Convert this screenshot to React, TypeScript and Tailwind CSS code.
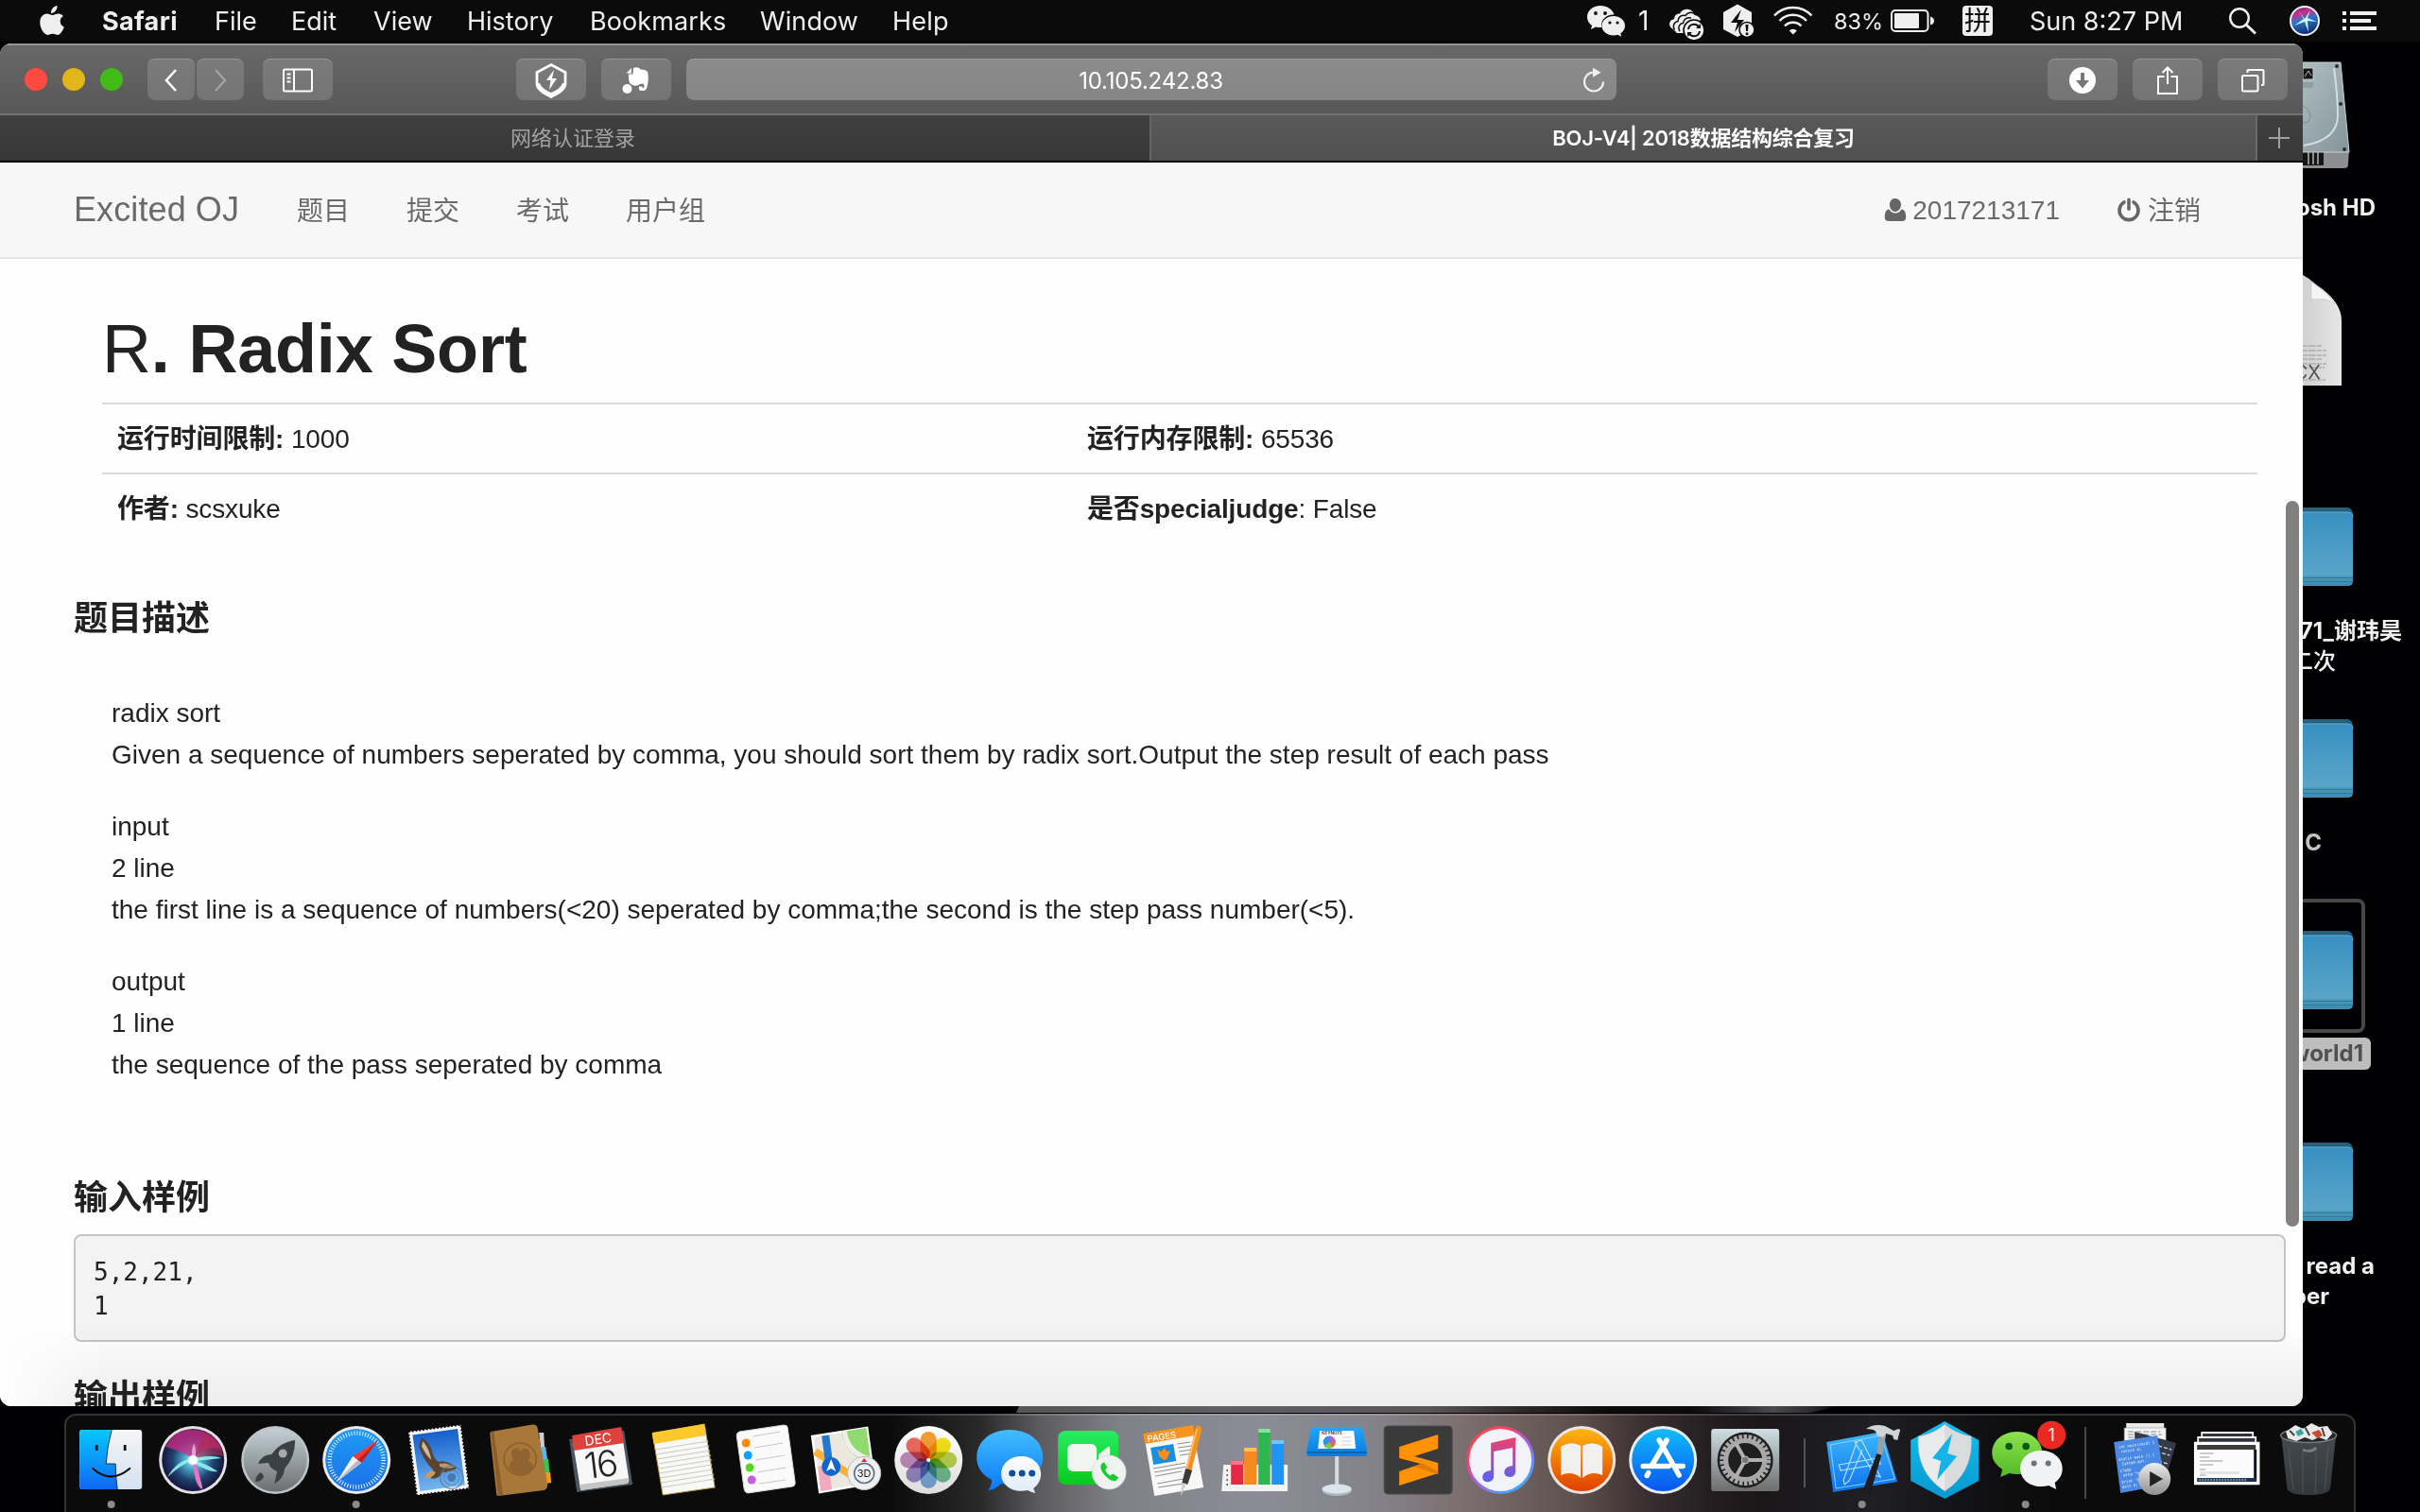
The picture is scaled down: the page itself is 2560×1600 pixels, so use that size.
import React from "react";

type Kids = { children?: React.ReactNode };

const SYS = "font-['Inter','Noto_Sans_CJK_SC',sans-serif]";
const HELV = "font-['Liberation_Sans','Noto_Sans_CJK_SC',sans-serif]";

/* ---------- menu bar ---------- */

const menus = [
  { label: "File", cls: "w-[81px]" },
  { label: "Edit", cls: "w-[87px]" },
  { label: "View", cls: "w-[99px]" },
  { label: "History", cls: "w-[130px]" },
  { label: "Bookmarks", cls: "w-[180px] tracking-[0.1px]" },
  { label: "Window", cls: "w-[140px] tracking-[0.1px]" },
  { label: "Help", cls: "w-[80px] tracking-[0.2px]" },
];

function MenuBar() {
  return (
    <header className={`${SYS} flex h-[44px] w-full items-center bg-[#0b0b0b] text-[27px] text-[#efefef]`}>
      <svg className="ml-[40px] h-[34px] w-[30px] shrink-0" viewBox="0 0 30 34">
        <path
          fill="#efefef"
          d="M20.500 1c.3 2.300-.6 4.300-1.900 5.800-1.300 1.400-3 2.200-4.700 2.100-.2-2.200.8-4.200 2-5.500C17.200 2 19.100 1.100 20.500 1zM27 11.900c-2.200 1.400-3.300 3-3.300 5.600 0 2.900 1.600 5 4.100 6.100-1.300 3.900-4 8.400-6.900 8.400-1.900 0-2.700-1.200-5.200-1.200-2.500 0-3.400 1.200-5.200 1.200C6.700 32 2.300 25.200 2.300 18.600c0-5.700 3.600-9.100 7.400-9.100 2.300 0 4.100 1.400 5.800 1.400 1.600 0 3.600-1.500 6.300-1.500 2.100.1 4 .9 5.200 2.500z"
        />
      </svg>
      <span className="ml-[38px] w-[119px] pt-[2px] font-bold tracking-[0.35px]">Safari</span>
      {menus.map((m) => (
        <span key={m.label} className={`pt-[2px] ${m.cls}`}>
          {m.label}
        </span>
      ))}
      <div className="flex-1" />
      <svg className="h-[44px] w-[440px] shrink-0" viewBox="1670 0 440 44" fill="#efefef">
        <path d="M1693 6c-8 0-14 5-14 12 0 4 2 7 5 9l-1 4 5-2.500c1.500.4 3 .6 5 .6l1.500-.1c-2-8 5-14 13-13.500C1706 10 1700 6 1693 6z" />
        <path d="M1707 17c-7 0-12.500 4.500-12.500 10.200 0 6 5.500 10.200 12.500 10.200 1.500 0 3-.2 4.300-.6l4 2-1-3.500c3-2 4.700-4.800 4.700-8.100 0-5.700-5.500-10.200-12-10.200z" />
        <g fill="#0b0b0b">
          <circle cx="1688" cy="14" r="1.900" />
          <circle cx="1698" cy="14" r="1.900" />
          <circle cx="1703" cy="24" r="1.600" />
          <circle cx="1711" cy="24" r="1.600" />
        </g>
        <text x="1733" y="32" fontSize="28" fontFamily="Inter">1</text>
        <g>
          <path d="M1770 31c-3-1.500-4-4-4-6 .5-3 2.500-4.500 5-4.700 0-4 3-6.300 6-5.800 1.500-3.500 5.500-5.500 9.500-4.500 3 .8 5.500 3 6 6 3 .5 5.500 2 6.500 5l-18 14h-7z" />
          <path d="M1771.500 31.500c-2.500-4-.5-8.500 3.500-9 0-4.500 4-7 8-6 1.500-3 6-4.500 10-1.500" fill="none" stroke="#0b0b0b" strokeWidth="1.500" />
          <path d="M1777 33c-2.500-4-.5-8 3.500-8.500.5-4.500 4.500-6.500 8.500-5.500" fill="none" stroke="#0b0b0b" strokeWidth="1.500" />
          <circle cx="1792" cy="32" r="11" stroke="#0b0b0b" strokeWidth="1.600" />
          <path d="M1786 31a6 6 0 0 1 11-2.500M1798 33a6 6 0 0 1-11 2.500" fill="none" stroke="#0b0b0b" strokeWidth="2" />
          <path d="M1799 25v5h-5zM1785 39v-5h5z" fill="#0b0b0b" />
        </g>
        <path d="M1838 4.500l15 8.500v18l-15 8-15-8V13z" />
        <path d="M1842 10l-11 14h7l-3 10 10-13h-7z" fill="#0b0b0b" />
        <circle cx="1848" cy="31.500" r="8" stroke="#0b0b0b" strokeWidth="1.600" />
        <path d="M1846.500 26h3l-.5 7h-2zM1846.700 34.500h2.600v2.600h-2.600z" fill="#0b0b0b" />
        <g fill="none" stroke="#efefef" strokeWidth="2.500">
          <path d="M1877 16.500a27 27 0 0 1 39.500 0" />
          <path d="M1882.500 22a19.500 19.500 0 0 1 28.500 0" />
          <path d="M1888 27.500a12 12 0 0 1 17.500 0" />
        </g>
        <path d="M1896.800 36.500l4-4a5.500 5.500 0 0 0-8 0z" />
        <text x="1940" y="30.500" fontSize="23.500" fontFamily="Inter">83%</text>
        <rect x="2001" y="11" width="38.500" height="22" rx="4" fill="none" stroke="#efefef" strokeWidth="2" />
        <rect x="2004" y="14" width="26" height="16" rx="1" />
        <path d="M2042 17.500q4 1 4 4.500t-4 4.500z" />
        <rect x="2076" y="6" width="32" height="32" rx="4" />
        <text x="2092" y="32" textAnchor="middle" fontSize="28" fill="#0b0b0b" fontFamily="Noto Sans CJK SC">拼</text>
      </svg>
      <span className="ml-[37px] w-[203px] pt-[2px]">Sun 8:27 PM</span>
      <svg className="h-[44px] w-[210px] shrink-0" viewBox="2350 0 210 44">
        <defs>
          <linearGradient id="mbSiri" x1="0" y1="0" x2=".3" y2="1">
            <stop offset="0" stopColor="#3a2d7e" />
            <stop offset=".3" stopColor="#d02b86" />
            <stop offset=".55" stopColor="#2a78c8" />
            <stop offset="1" stopColor="#15307c" />
          </linearGradient>
        </defs>
        <g fill="none" stroke="#efefef" strokeWidth="2.400">
          <circle cx="2369" cy="19" r="9.800" />
          <path d="M2376 26l10 9.500" strokeWidth="3" />
        </g>
        <circle cx="2438" cy="22" r="15" fill="url(#mbSiri)" stroke="#f2f2f2" strokeWidth="2" />
        <path d="M2438 20l-7-9 6 9-10 7 11-4 4 11-1-12 10 1-10-4 3-8z" fill="#c9f6ff" />
        <g fill="#efefef">
          <path d="M2478 12h4v4h-4zM2486 12h28v4h-28zM2478 20h4v4h-4zM2486 20h22v4h-22zM2478 28h4v4h-4zM2486 28h28v4h-28z" />
        </g>
      </svg>
    </header>
  );
}

/* ---------- Safari toolbar and tabs ---------- */

function ToolButton({ className, children }: Kids & { className: string }) {
  return (
    <button
      className={`flex h-[44px] shrink-0 items-center justify-center rounded-[8px] border-t border-[#989898] bg-gradient-to-b from-[#7b7b7b] to-[#747474] ${className}`}
    >
      {children}
    </button>
  );
}

function Toolbar() {
  return (
    <div className="flex h-[74px] items-center border-t-2 border-[#949494] bg-gradient-to-b from-[#686868] to-[#585858]">
      <div className="ml-[26px] flex gap-[16px]">
        <i className="size-[24px] rounded-full bg-[#ff4a42]" />
        <i className="size-[24px] rounded-full bg-[#e2b51d]" />
        <i className="size-[24px] rounded-full bg-[#42ba18]" />
      </div>
      <ToolButton className="ml-[26px] w-[50px]">
        <svg width="18" height="28" viewBox="0 0 18 28" fill="none" stroke="#fff" strokeWidth="2.600">
          <path d="M14 3L4 14l10 11" />
        </svg>
      </ToolButton>
      <ToolButton className="ml-[2px] w-[50px]">
        <svg width="18" height="28" viewBox="0 0 18 28" fill="none" stroke="#a4a4a4" strokeWidth="2.200">
          <path d="M4 3l10 11L4 25" />
        </svg>
      </ToolButton>
      <ToolButton className="ml-[20px] w-[74px]">
        <svg width="32" height="26" viewBox="0 0 32 26" fill="none" stroke="#fff" strokeWidth="2">
          <rect x="1" y="1.500" width="30" height="23" rx="1.500" />
          <path d="M12 1.500v23M4.500 6.500h4M4.500 10.500h4M4.500 14.500h4" />
        </svg>
      </ToolButton>
      <ToolButton className="ml-[194px] w-[74px]">
        <svg width="36" height="38" viewBox="0 0 36 38">
          <path d="M18 2.500l15 8v12c0 6-7 10-15 14-8-4-15-8-15-14v-12z" fill="none" stroke="#fff" strokeWidth="2.800" />
          <path d="M3 22c0 6 7 11 15 15 8-4 15-9 15-15l-3 0c-2 5-7 8-12 10-5-2-10-5-12-10z" fill="#fff" />
          <path d="M21 8l-8 11h4.500l-1.500 10 8-12h-5z" fill="#fff" />
        </svg>
      </ToolButton>
      <ToolButton className="ml-[16px] w-[74px]">
        <svg width="32" height="32" viewBox="0 0 32 32" fill="#fff">
          <path d="M13 3c3-1.500 6-1 7.500 1.500 4 .2 7 .8 7.800 3 1 5 .5 11-.8 15.500-.9 3.500-3.200 4.500-6.500 4-2-.4-2.500-2-2-4.500h3.500v1.500h1.500c1-1.500.5-4-1-4.500l-3.500.5c-1.500 2-3.500 1.800-5.500 1.500-3.500-.6-6-3-6-8L8 9.500h4.500z" />
          <path d="M11 3L5.500 8.500H11z" />
          <circle cx="6.500" cy="25" r="5" />
        </svg>
      </ToolButton>
      <div
        className={`${SYS} ml-[16px] flex h-[44px] w-[984px] items-center rounded-[8px] border-t border-[#9c9c9c] bg-gradient-to-b from-[#8b8b8b] to-[#868686] text-[24px] text-white`}
      >
        <span className="w-[35px]" />
        <span className="flex-1 pt-[2px] text-center tracking-[-0.2px]">10.105.242.83</span>
        <svg className="mr-[12px]" width="24" height="30" viewBox="0 0 24 30">
          <path d="M12 6.500A10 10 0 1 0 22 16.500" fill="none" stroke="#efefef" strokeWidth="2.200" />
          <path d="M11 1.500l8.500 5.300-8.500 5z" fill="#efefef" />
        </svg>
      </div>
      <div className="flex-1" />
      <ToolButton className="w-[74px]">
        <svg width="28" height="28" viewBox="0 0 28 28">
          <circle cx="14" cy="14" r="14" fill="#fff" />
          <path d="M12 6h4v8h5l-7 8.500L7 14h5z" fill="#777" />
        </svg>
      </ToolButton>
      <ToolButton className="ml-[16px] w-[74px]">
        <svg width="24" height="32" viewBox="0 0 24 32" fill="none" stroke="#fff" strokeWidth="2">
          <path d="M8.500 12H2v18h20V12h-6.500M12 20V3M6.500 8L12 2.500 17.500 8" />
        </svg>
      </ToolButton>
      <ToolButton className="mr-[16px] ml-[16px] w-[74px]">
        <svg width="26" height="26" viewBox="0 0 26 26" fill="none" stroke="#fff" strokeWidth="2">
          <rect x="2" y="8" width="16.500" height="16.500" rx="1.500" />
          <path d="M7.500 5V2.500q0-.5 1-.5h15q1 0 1 1v14q0 1-1 1H22" />
        </svg>
      </ToolButton>
    </div>
  );
}

function TabBar() {
  return (
    <div className={`${SYS} flex h-[52px] border-t-2 border-b-2 border-t-[#727272] border-b-black text-[22px]`}>
      <div className="flex w-[1218px] items-center justify-center border-r-2 border-[#666] bg-gradient-to-b from-[#404040] to-[#363636] pr-[4px] text-[#a3a3a3]">
        网络认证登录
      </div>
      <div className="flex flex-1 items-center justify-center bg-gradient-to-b from-[#595959] to-[#505050] font-semibold text-white">
        <span className="tracking-[-0.25px]">BOJ-V4| 2018数据结构综合复习</span>
      </div>
      <div className="flex w-[50px] items-center justify-center border-l-2 border-[#6a6a6a] bg-gradient-to-b from-[#404040] to-[#383838] pr-[2px]">
        <svg width="22" height="22" viewBox="0 0 22 22" stroke="#a0a0a0" strokeWidth="2">
          <path d="M11 0v22M0 11h22" />
        </svg>
      </div>
    </div>
  );
}

/* ---------- page ---------- */

function SiteNav() {
  return (
    <nav className="flex h-[102px] shrink-0 items-center border-b-2 border-[#e4e4e4] bg-[#f7f7f7] pl-[78px] text-[28px] text-[#6a6a6a]">
      <span className="w-[236px] text-[36px] tracking-[0.1px]">Excited OJ</span>
      <div className="flex gap-[60px] pt-[3px]">
        <span>题目</span>
        <span>提交</span>
        <span>考试</span>
        <span>用户组</span>
      </div>
      <div className="flex-1" />
      <svg width="24" height="24" viewBox="0 0 24 24" fill="#666">
        <path d="M12 0c3.500 0 6 3 6 6.500S15.500 14 12 14 6 10.500 6 6.500 8.500 0 12 0z" />
        <path d="M5.500 11.500C2 12 .8 15 .8 20c0 2.500 1.500 4 4 4h14.400c2.500 0 4-1.500 4-4 0-5-1.200-8-4.700-8.500C17 14 15 15.500 12 15.500S7 14 5.500 11.500z" />
      </svg>
      <span className="ml-[6px] pt-[2px]">2017213171</span>
      <svg className="ml-[60px]" width="26" height="26" viewBox="0 0 26 26" fill="none" stroke="#666" strokeWidth="3.600" strokeLinecap="round">
        <path d="M13 2.200v10M8 5a10 10 0 1 0 10 0" />
      </svg>
      <span className="mr-[108px] ml-[7px] pt-[3px]">注销</span>
    </nav>
  );
}

function Row({ a, b, c, d }: { a: React.ReactNode; b: string; c: React.ReactNode; d: string }) {
  return (
    <div className="flex h-[74px] border-t-2 border-[#dadada] pt-[17px] leading-[40px] tracking-[-0.15px]">
      <div className="w-[1026px] pl-[16px]">
        <b>{a}</b> {b}
      </div>
      <div className="pl-[16px]">
        <b>{c}</b>
        {d}
      </div>
    </div>
  );
}

function Page() {
  return (
    <main className={`${HELV} flex h-[1316px] flex-col overflow-hidden bg-[#fefefe] text-[28px] text-[#222]`}>
      <SiteNav />
      <div className="ml-[108px] w-[2280px]">
        <h1 className="mt-[55px] h-[97px] text-[72px] leading-[80px] font-bold tracking-[-0.2px]">
          <span className="font-normal">R</span>. Radix Sort
        </h1>
        <Row a="运行时间限制:" b="1000" c="运行内存限制:" d=" 65536" />
        <Row a="作者:" b="scsxuke" c="是否specialjudge" d=": False" />
      </div>
      <h3 className="mt-[61px] ml-[78px] h-[40px] text-[36px] leading-[40px] font-bold">题目描述</h3>
      <div className="mt-[58px] ml-[118px] flex flex-col gap-[32px] leading-[44px]">
        <p>
          radix sort
          <br />
          Given a sequence of numbers seperated by comma, you should sort them by radix sort.Output the step result of each pass
        </p>
        <p>
          input
          <br />
          2 line
          <br />
          the first line is a sequence of numbers(&lt;20) seperated by comma;the second is the step pass number(&lt;5).
        </p>
        <p>
          output
          <br />1 line
          <br />
          the sequence of the pass seperated by comma
        </p>
      </div>
      <h3 className="mt-[99px] ml-[78px] h-[40px] text-[36px] leading-[40px] font-bold">输入样例</h3>
      <pre className="mt-[18px] ml-[78px] h-[114px] w-[2340px] shrink-0 rounded-[8px] border-2 border-[#c4c4c4] bg-[#f3f3f3] pt-[20px] pl-[19px] font-['DejaVu_Sans_Mono',monospace] text-[26px] leading-[36px]">
        {"5,2,21,\n1"}
      </pre>
      <h3 className="mt-[39px] ml-[78px] h-[40px] shrink-0 text-[36px] leading-[40px] font-bold">输出样例</h3>
    </main>
  );
}

function SafariWindow() {
  return (
    <section className="absolute top-[46px] left-0 h-[1442px] w-[2436px] overflow-hidden rounded-[12px] bg-white">
      <Toolbar />
      <TabBar />
      <Page />
      <div className="absolute bottom-0 left-0 h-[86px] w-full bg-gradient-to-t from-black/[0.07] to-transparent [mask-image:linear-gradient(to_right,transparent,black_110px)]" />
      <div className="absolute top-[484px] left-[2418px] h-[768px] w-[14px] rounded-full bg-[#808080]" />
    </section>
  );
}

/* ---------- desktop ---------- */

function Folder({ top }: { top: string }) {
  return (
    <svg className={`absolute left-[2404px] ${top}`} width="88" height="86" viewBox="0 0 88 86">
      <defs>
        <linearGradient id="folder" x1="0" y1="0" x2="0" y2="1">
          <stop offset="0" stopColor="#3890c0" />
          <stop offset=".85" stopColor="#5aa5c9" />
          <stop offset=".87" stopColor="#4a98bc" />
          <stop offset="1" stopColor="#3f8aac" />
        </linearGradient>
      </defs>
      <path d="M0 1h78q7 0 7 8v10H0z" fill="#285f7c" />
      <path d="M0 6h79q6 0 6 5v68q0 5-5 5H0z" fill="url(#folder)" />
      <path d="M0 6h79q6 0 6 5" fill="none" stroke="#66b3d8" />
      <path d="M0 75.500h85M0 79.500h85" stroke="#2f7898" />
    </svg>
  );
}

function Label({ className, children }: Kids & { className: string }) {
  return <div className={`absolute text-right text-[24px] leading-[32px] font-bold whitespace-nowrap ${className}`}>{children}</div>;
}

function Desktop() {
  return (
    <div className={`${SYS} text-[#f0f0f0]`}>
      <svg className="absolute top-[60px] left-[2400px]" width="100" height="125" viewBox="0 0 100 125">
        <defs>
          <linearGradient id="hdd" x1="0" y1="0" x2="1" y2="1">
            <stop offset="0" stopColor="#b4c3c5" />
            <stop offset="1" stopColor="#84949a" />
          </linearGradient>
        </defs>
        <path d="M20 98h65l-1 16q0 4-4 4H20z" fill="#8c8f90" />
        <path d="M20 100h38v15H20z" fill="#151515" />
        <path d="M41 101h2v13h-2zM46 101h2v13h-2zM51 101h2v13h-2z" fill="#8b8b8b" />
        <path d="M20 6h56l9 95H20z" fill="url(#hdd)" stroke="#c7d2d3" />
        <path d="M69 12q4 30 4 50 0 26-36 32" fill="none" stroke="#d4dede" strokeWidth="2" />
        <path d="M36 52q8 4 8 11t-8 7" fill="none" stroke="#7c8a90" />
        <path d="M36 12h11v12H36z" fill="#16181a" stroke="#ccc" />
        <path d="M38 21l4-6 3 5" stroke="#bbb" fill="none" />
        <path d="M36 27h12l-2 6H36z" fill="#8fa0a4" />
        <g fill="#203438">
          <circle cx="72" cy="10" r="2" />
          <circle cx="76" cy="50" r="2" />
          <circle cx="80" cy="98" r="2" />
        </g>
      </svg>
      <Label className="top-[204px] right-[47px]">osh HD</Label>
      <svg className="absolute top-[286px] left-[2400px]" width="80" height="124" viewBox="0 0 80 124">
        <defs>
          <linearGradient id="docx" x1="0" y1="0" x2="1" y2="0">
            <stop offset=".4" stopColor="#d3d3d3" />
            <stop offset="1" stopColor="#e6e6e6" />
          </linearGradient>
        </defs>
        <path d="M20 0q16 2 30 15 27 18 27 38v69H20z" fill="url(#docx)" />
        <path d="M45 12v19q18-2 25 4-6-9-25-23z" fill="#f4f4f4" stroke="#bbb" strokeWidth=".5" />
        <path d="M36 80h20M36 85h25M36 90h25M36 94h20M36 99h25M36 103h23M36 116h24" stroke="#999" strokeWidth="1" strokeDasharray="5 1 8 1" />
        <text x="55" y="115" textAnchor="end" fontSize="20" fill="#555" fontFamily="Inter">CX</text>
      </svg>
      <Folder top="top-[536px]" />
      <Label className="top-[651px] right-[19px] leading-[33px]">71_谢玮昊</Label>
      <Label className="top-[684px] right-[89px] font-medium">二次</Label>
      <Folder top="top-[760px]" />
      <Label className="top-[876px] right-[104px] text-[#c4c4c4]">C</Label>
      <div className="absolute top-[951px] left-[2380px] h-[142px] w-[122px] rounded-[8px] border-4 border-[#474747]" />
      <Folder top="top-[984px]" />
      <Label className="top-[1098px] right-[52px] w-[90px] rounded-[6px] bg-[#bdbdbd] pr-[8px] leading-[34px] text-[#505050]">
        world1
      </Label>
      <Folder top="top-[1208px]" />
      <Label className="top-[1324px] right-[48px]">read a</Label>
      <Label className="top-[1356px] right-[96px]">ber</Label>
    </div>
  );
}

/* ---------- dock ---------- */

function DockIcon({ children, running }: Kids & { running?: boolean }) {
  return (
    <svg className="h-[104px] w-[86.4px] shrink-0" viewBox="0 0 86 104">
      {children}
      {running && <circle cx="42.500" cy="94" r="4" fill="#8a8a8a" />}
    </svg>
  );
}

const petals = ["#f7941d", "#f5e000", "#b5cf3b", "#63b985", "#6aa5dc", "#8d7cc0", "#bd7fb5", "#ee5a4f"];

function Defs() {
  const g = (id: string, a: string, b: string) => (
    <linearGradient id={id} x1="0" y1="0" x2="0" y2="1">
      <stop offset="0" stopColor={a} />
      <stop offset="1" stopColor={b} />
    </linearGradient>
  );
  return (
    <svg className="absolute" width="0" height="0">
      <defs>
        {g("gFinder", "#06c8fd", "#1067f3")}
        {g("gFace", "#f4f5f7", "#d4e2f2")}
        {g("gLaunch", "#c3d0d6", "#6c6f70")}
        {g("gSaf", "#1e9bf5", "#1d6fe8")}
        {g("gSky", "#1560cc", "#74b5ef")}
        {g("gMsg", "#43bdfd", "#0a79fb")}
        {g("gSmall", "#fdfdfd", "#dcebf8")}
        {g("gGreen", "#28ec63", "#08c91d")}
        {g("gBook", "#ffb60d", "#e03f00")}
        {g("gStore", "#0fbcfb", "#0a55f0")}
        {g("gPref", "#cfdfe4", "#6c6d6c")}
        {g("gX", "#3cb8fb", "#0f72ee")}
        {g("gShield", "#12bff0", "#0898cf")}
        {g("gWe", "#8ce24f", "#53b925")}
        {g("gTrash", "#454b50", "#33383c")}
        {g("gNote", "#f23f6c", "#5363fa")}
        {g("gWhite", "#ffffff", "#dcdcdc")}
        {g("gKey", "#24a6fb", "#067ce0")}
        {g("gBall", "#ededed", "#8e8e8e")}
        <radialGradient id="gSiri" cx=".5" cy=".5" r=".55">
          <stop offset="0" stopColor="#d9fbff" />
          <stop offset=".22" stopColor="#52b5d3" />
          <stop offset=".6" stopColor="#20406f" />
          <stop offset="1" stopColor="#120c2e" />
        </radialGradient>
      </defs>
    </svg>
  );
}

function Dock() {
  return (
    <footer className="absolute top-[1496px] left-[68px] flex h-[108px] w-[2424px] items-start rounded-t-[12px] border-2 border-[#ffffff2a] bg-[linear-gradient(to_right,#0b0b0b_0,#0b0b0b_36%,#2a2a2b_40%,#5b5b5e_42.500%,#808188_46%,#8b8c95_52%,#84838a_57%,#7c6f70_61%,#5e504c_66%,#3a2f31_69%,#241d20_72%,#1a1719_74%,#1f1f24_79%,#101012_84%,#0b0b0b_87%)] pl-[5px]">
      <Defs />
      <DockIcon running>
        <rect x="9" y="15" width="66" height="63" rx="3" fill="url(#gFace)" />
        <path d="M12 15h31q-5 18-6 36h10q0 14 2 27H12q-3 0-3-3V18q0-3 3-3z" fill="url(#gFinder)" />
        <path d="M43 15q-5 18-6 36h10q0 14 2 27" fill="none" stroke="#17365c" strokeWidth="1" />
        <path d="M27 31v6M57 31v6" stroke="#111" strokeWidth="2.800" />
        <path d="M23 56q19 17 39 0" fill="none" stroke="#111" strokeWidth="2.200" strokeLinecap="round" />
      </DockIcon>
      <DockIcon>
        <circle cx="43" cy="47" r="36" fill="#e4e1e4" />
        <circle cx="43" cy="47" r="33" fill="url(#gSiri)" />
        <path d="M14 33Q24 13 45 15q22 2 29 22-14-8-31 8-14-8-29-12z" fill="#cf2b85" opacity=".75" />
        <path d="M55 19q17 8 20 24-12-4-32 4z" fill="#b42a4c" opacity=".6" />
        <path d="M43 47Q30 52 16 65q10-18 27-20 22-4 30 0-16 2-29 3 12 2 25 11-8 2-25-9 8 18 9 28-6-6-10-30z" fill="#93f1ef" opacity=".9" />
        <path d="M43 48q7 8 9 30-8-6-9-30z" fill="#ef6fc0" />
        <path d="M43 47q-3-9 1-18 4 9 0 18z" fill="#f0c4ee" opacity=".7" />
        <circle cx="43" cy="47" r="5" fill="#fff" />
      </DockIcon>
      <DockIcon>
        <circle cx="43" cy="47" r="36" fill="#bcc5ca" />
        <circle cx="43" cy="47" r="33.500" fill="url(#gLaunch)" />
        <path d="M64 26q-16 2-25 15-10 0-14 10l11-1q1 6 9 9l-3 13q10-5 11-16 11-12 11-30z" fill="#3b4045" />
        <circle cx="51" cy="40" r="4.500" fill="#a3abae" />
        <path d="M28 60q-6 3-6 10 7 0 9-6z" fill="#3b4045" />
      </DockIcon>
      <DockIcon running>
        <circle cx="43" cy="47" r="36" fill="#e9eaec" />
        <circle cx="43" cy="47" r="33" fill="url(#gSaf)" />
        <circle cx="43" cy="47" r="28.500" fill="none" stroke="#e6f4ff" strokeWidth="4.500" strokeDasharray="1 1.984" />
        <path d="M66 26L48 50l-9-7z" fill="#ef3b36" />
        <path d="M66 26L48 50l-4-3z" fill="#c21e21" />
        <path d="M22 70l17-27 9 7z" fill="#f3f3f5" />
        <path d="M22 70l22-23 4 3z" fill="#b9bcc2" />
      </DockIcon>
      <DockIcon>
        <g transform="rotate(-7.500 43 47)">
          <rect x="15" y="13" width="56" height="68" fill="#f6f6f6" />
          <rect x="15" y="13" width="56" height="68" fill="none" stroke="#0b0b0b" strokeWidth="2" strokeDasharray="1.800 2" />
          <rect x="19" y="17" width="48" height="60" fill="url(#gSky)" />
          <path d="M28 21q7 5 9 15 1 10 6 13 7-2 18 9-8 4-15 2-7 8-14 5l4-8Q26 44 24 29z" fill="#5a4431" />
          <path d="M29 25q6 10 6 21-6-8-8-16z" fill="#c8b9a2" />
          <path d="M43 51q9-1 15 6-8 1-15-3z" fill="#b99a70" />
          <path d="M33 57q-6 2-7 7 9 2 12-5z" fill="#c99a5c" />
          <circle cx="54" cy="67" r="12" fill="none" stroke="#58789a" strokeWidth="1.500" opacity=".7" />
          <circle cx="54" cy="67" r="8" fill="none" stroke="#58789a" opacity=".7" />
          <circle cx="54" cy="67" r="4.500" fill="#3b6795" opacity=".7" />
        </g>
      </DockIcon>
      <DockIcon>
        <path d="M63 18l5 0 1 18-4 1z" fill="#c9ccd0" />
        <path d="M65 33h5l2 14-5 1z" fill="#58b9e8" />
        <path d="M67 46h6l1 15-5 1z" fill="#37c554" />
        <path d="M69 60h6l1 11-6 1z" fill="#f09a19" />
        <path d="M12 17L56 9.500q5-.5 5.500 4L72 73q0 5-4 6l-48 6q-2 0-2-2L11 19z" fill="#a8773a" />
        <path d="M12 17l3 0 10 67-5 1z" fill="#8b5e2a" />
        <circle cx="43" cy="46" r="17" fill="none" stroke="#8a5f2c" strokeWidth="1.500" />
        <path d="M31 55q1-6 5-8-3-4-2-9 3-5 8-3l1 4q2-5 7-4 5 3 3 9l-2 4q5 2 7 7-5 7-14 7-9 0-13-7z" fill="#8f6430" />
      </DockIcon>
      <DockIcon>
        <path d="M9 25l58-9 9 57-59 8z" fill="#4a5763" />
        <path d="M13 29l52-8 7 46q1 4-4 5l-47 7z" fill="#f7f7f7" />
        <path d="M20 73l52-7-1 6-50 7z" fill="#c5c5c5" />
        <path d="M12 21l52-9 3 17-53 8z" fill="#e0413d" />
        <text x="39.500" y="30" textAnchor="middle" fontSize="14" fill="#fff" fontFamily="Inter" transform="rotate(-8 39.500 25)">DEC</text>
        <text x="42" y="65" textAnchor="middle" fontSize="38" fontWeight="300" fill="#222" fontFamily="Inter" letterSpacing="-2" transform="rotate(-7 42 52)">16</text>
      </DockIcon>
      <DockIcon>
        <path d="M10 19l55-10 11 67-55 8z" fill="#f8f8f6" stroke="#b69b3e" strokeWidth="1" />
        <path d="M9.500 18l55-9 2 12-55 9z" fill="#fdc82b" />
        <g stroke="#c9c9c9" strokeWidth="1">
          <path d="M13 36l56-9M14 41l56-9M15 46l56-9M16 51l56-9M17 56l56-9M17 61l56-9M18 66l56-9M19 71l56-9M20 76l56-9" />
        </g>
      </DockIcon>
      <DockIcon>
        <path d="M16 17l47-7q4 0 4 3l8 58q0 4-3 4l-47 7q-3 0-4-4l-8-57q0-3 3-4z" fill="#fafafa" stroke="#d9d9d9" />
        <path d="M30 22l29-5M32 34l30-5M33 47l31-5M35 60l30-5M37 72l28-4" stroke="#c7c7c7" />
        <circle cx="23" cy="29" r="4.500" fill="#ff8a0a" />
        <circle cx="25" cy="42" r="4.500" fill="#12a0ff" />
        <circle cx="27" cy="55" r="4.500" fill="#55d61f" />
        <circle cx="29" cy="68" r="4.500" fill="#c45fe0" />
      </DockIcon>
      <DockIcon>
        <path d="M6 22l58-9 8 58-58 10z" fill="#ece8df" stroke="#fff" strokeWidth="2.500" />
        <path d="M37 17l26-4 5 36q-25-4-31-32z" fill="#8fdb70" />
        <path d="M40 16q3 24 27 30" fill="none" stroke="#f2efe8" strokeWidth="5" />
        <path d="M12 54l11-2 4 26-12 2z" fill="#f4a9bc" />
        <path d="M9 38l56 37" stroke="#fcb034" strokeWidth="8" />
        <path d="M20 21l4 30" stroke="#2477cc" strokeWidth="8" />
        <circle cx="26" cy="54" r="10" fill="#1267cd" />
        <path d="M26 46l5 13-5-3-5 3z" fill="#fff" />
        <circle cx="61" cy="61" r="17.500" fill="#efefef" stroke="#bbb" />
        <circle cx="61" cy="61" r="10.500" fill="none" stroke="#54748b" strokeWidth="1.600" />
        <text x="61" y="65" textAnchor="middle" fontSize="11" fill="#222" fontFamily="Inter">3D</text>
        <path d="M61 45l3 4h-6z" fill="#e22" />
      </DockIcon>
      <DockIcon>
        <circle cx="43" cy="47" r="36" fill="url(#gWhite)" />
        {petals.map((c, i) => (
          <rect key={c} x="34.500" y="17" width="17" height="29" rx="8.500" fill={c} transform={`rotate(${i * 45} 43 47)`} opacity=".9" className="mix-blend-multiply" />
        ))}
        <circle cx="43" cy="47" r="2" fill="#fff" />
      </DockIcon>
      <DockIcon>
        <path d="M43 15c20 0 35 12 35 29S63 73 43 73q-5 0-9-1-6 6-14 7 4-5 4-11C14 63 8 55 8 44c0-17 15-29 35-29z" fill="url(#gMsg)" />
        <path d="M55 43c12 0 21 8 21 19q0 9-8 15l2 5q-5-1-8-3-3 .7-7 .7c-12 0-21-7.700-21-18S43 43 55 43z" fill="url(#gSmall)" />
        <g fill="#0e4f9f">
          <circle cx="45.500" cy="61" r="3.500" />
          <circle cx="56" cy="61" r="3.500" />
          <circle cx="66.500" cy="61" r="3.500" />
        </g>
      </DockIcon>
      <DockIcon>
        <rect x="7" y="16" width="64" height="57" rx="8" fill="url(#gGreen)" />
        <rect x="17" y="30" width="31" height="29" rx="6" fill="#f1f5f1" />
        <path d="M50 41l10-8q2-1 2 2v16q0 3-2 2l-10-6z" fill="#f1f5f1" />
        <circle cx="61" cy="60" r="18" fill="#eff2ee" stroke="#c9cfc9" strokeWidth=".6" />
        <path d="M54 50q-5 4 2 12.500 8 9 13 6l2-3-6-4-3 2q-4-3-5-6l2-3-3-5z" fill="#16cc33" />
      </DockIcon>
      <DockIcon>
        <path d="M12 20l51-9 12 65-52 9z" fill="#f8f8f8" />
        <path d="M11 19l53-9 2 11-53 9z" fill="#f7931e" />
        <text x="16" y="28" fontSize="9.500" fill="#fff" fontWeight="500" fontFamily="Inter" transform="rotate(-9 16 28)">PAGES</text>
        <path d="M19 34l24-4 3 18-24 4z" fill="#1a8fe0" />
        <path d="M26 36l4 2 4-4 2 4 4-1-4 9-3 1-5-4z" fill="#f78d1b" />
        <path d="M47 30l14-2M48 34l14-2M49 38l14-2M50 42l14-2M22 56l34-6M23 60l34-6M24 64l28-5M26 72l28-5M27 76l26-4" stroke="#8e8e8e" />
        <path d="M67 12q2-3 5 0l1 3-14 56-6-2z" fill="#f5921e" />
        <path d="M68 14l-13 50" stroke="#ffc56c" strokeWidth="1.500" />
        <path d="M56 56l7 2-5 15-6-1z" fill="#3a3a3a" />
        <path d="M52 71l5 1-6 13z" fill="#cfd3d6" />
      </DockIcon>
      <DockIcon>
        <path d="M10 52h68v28H8z" fill="#f3f3f3" />
        <path d="M14 57v2M14 62v2M14 67v2M14 72v2" stroke="#555" strokeWidth="1.500" />
        <rect x="18" y="48" width="13" height="25" fill="#e32a45" />
        <rect x="32" y="34" width="13" height="39" fill="#f58a1f" />
        <rect x="47" y="14" width="12.500" height="59" fill="#2db84f" />
        <rect x="61" y="26" width="13" height="47" fill="#2094f2" />
        <path d="M18 48h13v4H18z" fill="#ff7485" />
        <path d="M32 34h13v4H32z" fill="#ffc15d" />
        <path d="M47 14h12.500v4H47z" fill="#7fe79a" />
        <path d="M61 26h13v4H61z" fill="#71c6ff" />
      </DockIcon>
      <DockIcon>
        <rect x="41" y="42" width="4" height="36" fill="#d4dbe0" />
        <ellipse cx="43" cy="79" rx="15.500" ry="6" fill="#aebac2" />
        <ellipse cx="43" cy="77.500" rx="15.500" ry="5" fill="#dbe4ea" />
        <path d="M16 12h54l5 26q.5 5-3 5H14q-3.500 0-3-5z" fill="url(#gKey)" />
        <path d="M12 39h62" stroke="#055ca8" strokeWidth="1.500" />
        <path d="M25 16h36l2 19H23z" fill="#fafafa" />
        <text x="38" y="20" textAnchor="middle" fontSize="4.500" fontWeight="700" fill="#444" fontFamily="Inter">KEYNOTE</text>
        <circle cx="35" cy="28" r="6.500" fill="#2396e8" />
        <path d="M35 28v-6.500a6.500 6.500 0 0 1 6.500 6.500z" fill="#b05fd0" />
        <path d="M35 28h6.500a6.500 6.500 0 0 1-3 5.500z" fill="#f1683c" />
        <path d="M35 28l3.500 5.500a6.500 6.500 0 0 1-9-1z" fill="#7ac943" />
        <path d="M48 23h10M48 27h10M48 31h10" stroke="#c5d6e4" />
      </DockIcon>
      <DockIcon>
        <rect x="7" y="11" width="72" height="72" rx="4" fill="#3a3a3a" stroke="#4a4a4a" />
        <path d="M23 33l41-13v15L39 43l25 7v11L23 74V59l23-8-23-6z" fill="#ff9207" />
        <path d="M39 54l8-4 17 9v3z" fill="#e07a00" />
      </DockIcon>
      <DockIcon>
        <defs>
          <linearGradient id="gTunes" x1=".1" y1="0" x2=".9" y2="1">
            <stop offset="0" stopColor="#ff4a3d" />
            <stop offset=".3" stopColor="#f2416d" />
            <stop offset=".5" stopColor="#b05be8" />
            <stop offset="1" stopColor="#22bdf9" />
          </linearGradient>
        </defs>
        <circle cx="43" cy="47" r="36" fill="url(#gTunes)" />
        <circle cx="43" cy="47" r="33" fill="#f2f3f8" />
        <path d="M33 29l26-6v36q0 5-5 6-7 0-7-5 0-6 9-7V34l-20 4v26q0 5-5 6-7 1-7-5 0-6 9-7z" fill="url(#gNote)" />
      </DockIcon>
      <DockIcon>
        <circle cx="43" cy="47" r="36" fill="#ebe6e2" />
        <circle cx="43" cy="47" r="33" fill="url(#gBook)" />
        <path d="M21 33q11-7 21-1v34q-9-8-21-3zM65 33q-11-7-21-1v34q9-8 21-3z" fill="#f2f0ee" />
      </DockIcon>
      <DockIcon>
        <circle cx="43" cy="47" r="36" fill="#e8edf2" />
        <circle cx="43" cy="47" r="33" fill="url(#gStore)" />
        <g stroke="#fff" strokeWidth="5.500" strokeLinecap="round">
          <path d="M47 26L31 53M39 26l21 37M22 53.500h27M57 53.500h7M27.500 60.500l-1.500 3" />
        </g>
      </DockIcon>
      <DockIcon>
        <rect x="7" y="14" width="72" height="66" rx="3" fill="url(#gPref)" />
        <circle cx="43" cy="47" r="29.500" fill="#1f1f1f" />
        <circle cx="43" cy="47" r="24" fill="none" stroke="#a8a8a8" strokeWidth="6" strokeDasharray="3.500 1.530" />
        <circle cx="43" cy="47" r="20.500" fill="none" stroke="#a8a8a8" strokeWidth="5" />
        <path d="M43 47h20M43 47L33 29M43 47L33 65" stroke="#b0b0b0" strokeWidth="4" />
        <circle cx="43" cy="47" r="4" fill="#777" stroke="#c5c5c5" />
      </DockIcon>
      <div className="h-[104px] w-[38px] shrink-0 pt-[24px] pl-[19px]">
        <div className="h-[52px] w-[2px] bg-[#555558]" />
      </div>
      <DockIcon running>
        <path d="M5 28l59-11 16 53-68 11z" fill="url(#gX)" />
        <path d="M9 31l54-10 14 46-62 10z" fill="none" stroke="#8fd0ff" strokeWidth="1" />
        <g fill="none" stroke="#b4e0ff" strokeWidth="1.200">
          <path d="M35 28l7-2 20 39-6-2zM37 28l-14 40 1 5 5-4 14-33M18 52l42-7 2 6-42 7z" />
        </g>
        <path d="M59 38l5 1-12 41q-1 3-5 2-4-1-3-4z" fill="#1d1d1d" />
        <path d="M61 18l7 2-4 22-6-2z" fill="#9aa0a5" />
        <path d="M47 14q8-6 20-3l9 5 5-2 2 1-3 11-4-1-1-4-7-2-3 4-7-2q1-7-11-7z" fill="#cfd4d8" />
      </DockIcon>
      <DockIcon>
        <path d="M43 6l36 20v43L43 88 7 69V26z" fill="url(#gShield)" />
        <path d="M43 9q11 10 28 13 3 38-28 58Q12 60 15 22q17-3 28-13z" fill="#e9eaec" stroke="#96a8b0" strokeWidth=".6" />
        <path d="M43 9q11 10 28 13 3 38-28 58z" fill="#cfd1d4" opacity=".6" />
        <path d="M51 19L30 45l9 3-4 20 21-25-10-3z" fill="#16b3e8" />
      </DockIcon>
      <DockIcon running>
        <path d="M33.500 17C48 17 60 26 60 39.500S48 62 33.500 62q-4 0-8-1L16 65l2-8Q7 50 7 39.500C7 26 19 17 33.500 17z" fill="url(#gWe)" />
        <circle cx="25" cy="32.500" r="3.800" fill="#0d5a13" />
        <circle cx="43" cy="32.500" r="3.800" fill="#0d5a13" />
        <path d="M59 37c13 0 22.500 8 22.500 19 0 7-3 11-8 15l1.500 7-8-4q-4 1-8 1c-13 0-22-8-22-19s9-19 22-19z" fill="#f1f2f4" />
        <circle cx="51.500" cy="50.500" r="3" fill="#6d7377" />
        <circle cx="66.500" cy="50.500" r="3" fill="#6d7377" />
        <circle cx="70" cy="20.700" r="15" fill="#ea2a20" />
        <text x="70" y="27" textAnchor="middle" fontSize="18" fill="#fff" fontFamily="Inter">1</text>
      </DockIcon>
      <div className="h-[104px] w-[39px] shrink-0 pt-[12px] pl-[19px]">
        <div className="h-[76px] w-[2px] bg-[#48484a]" />
      </div>
      <DockIcon>
        <path d="M24 8h40v16H24z" fill="#e9e9e9" />
        <path d="M22 13h44v24H22z" fill="#f5f5f5" stroke="#999" strokeWidth=".6" />
        <path d="M26 17h34M26 20h36M26 23h30" stroke="#888" strokeDasharray="6 2" />
        <path d="M33 17l44 12-14 46-30-10z" fill="#343b48" />
        <path d="M58 32l14 4M56 38l14 4M58 48l10 3" stroke="#c5cad2" strokeWidth="1.500" strokeDasharray="4 2" />
        <path d="M11 28l46-7 8 52-47 9z" fill="#4a8ae4" />
        <g fill="#e8f2ff" fontFamily="DejaVu Sans Mono" fontSize="4" transform="rotate(-8 15 34)">
          <text x="16" y="35">int main(void) {"{"}</text>
          <text x="18" y="40">return 0;</text>
          <text x="14" y="48">static main () {"{"}</text>
          <text x="17" y="53">System.out.</text>
          <text x="14" y="60">&lt;?php</text>
          <text x="17" y="65">echo "he</text>
          <text x="14" y="72">print "h</text>
          <text x="14" y="77">exit 0;</text>
        </g>
        <circle cx="54" cy="67" r="17" fill="url(#gBall)" />
        <path d="M49 59l14 8-14 8z" fill="#222" />
      </DockIcon>
      <DockIcon>
        <path d="M17 18h54v12H17z" fill="#30343a" stroke="#f4f4f4" strokeWidth="1.800" />
        <path d="M13 23h61v12H13z" fill="#30343a" stroke="#f4f4f4" strokeWidth="1.800" />
        <rect x="10" y="29" width="67" height="43" fill="#fbfbfb" stroke="#fff" strokeWidth="2.500" />
        <path d="M12 31h62v5H12z" fill="#3b3b3b" />
        <path d="M72 36h3v31h-3z" fill="#0d1424" />
        <path d="M12 66h63v4H12z" fill="#20304c" />
        <path d="M14 68h50" stroke="#6c8ca8" strokeWidth="2.500" strokeDasharray="2 1" />
        <path d="M15 40h14M15 44h10M15 48h24M15 52h14M15 57h6M15 63h6" stroke="#999" strokeWidth="1.200" />
        <path d="M15 59h42v3H15z" fill="#e4e4e4" />
      </DockIcon>
      <DockIcon>
        <path d="M15 20q28-9 58 0l-6 56q-1 8-23 8t-23-8z" fill="url(#gTrash)" />
        <path d="M23 34q2 24 5 44M38 36v46M52 36l-1 46M65 32l-4 46" stroke="#686e73" strokeWidth="1.500" opacity=".35" fill="none" />
        <ellipse cx="44" cy="21" rx="29.500" ry="7.500" fill="#23272a" stroke="#777d81" strokeWidth="1.400" />
        <path d="M20 17l10-7 8 4 9-6 8 4 9-1 5 8-6 7-8-3-7 3-8-3-9 4-9-3z" fill="#e9e9e9" />
        <path d="M30 17l6-3 3 5-6 3z" fill="#35a7a0" />
        <path d="M47 18l8-3 4 6-6 3z" fill="#c74b2e" />
        <path d="M24 16l5 5M40 12l5 9M58 13l3 9" stroke="#444" strokeWidth="2" />
        <path d="M38 36q8 4 14-2" stroke="#a2a7aa" strokeWidth="2.500" fill="none" opacity=".6" />
      </DockIcon>
    </footer>
  );
}

export default function App() {
  return (
    <div className="relative h-[1600px] w-[2560px] overflow-hidden bg-[#010103]">
      <MenuBar />
      <Desktop />
      <div className="absolute top-[1488px] left-[1075px] h-[7px] w-[870px] bg-[linear-gradient(to_right,#555_0,#606062_25%,#5a5658_50%,#2c2629_62%,#0a0a0b_72%,#0a0a0b_82%,#4a4a4e_92%,#2a2a2c_97%,transparent_100%)] [clip-path:polygon(3px_0,100%_0,840px_100%,0_100%)]" />
      <SafariWindow />
      <Dock />
    </div>
  );
}
